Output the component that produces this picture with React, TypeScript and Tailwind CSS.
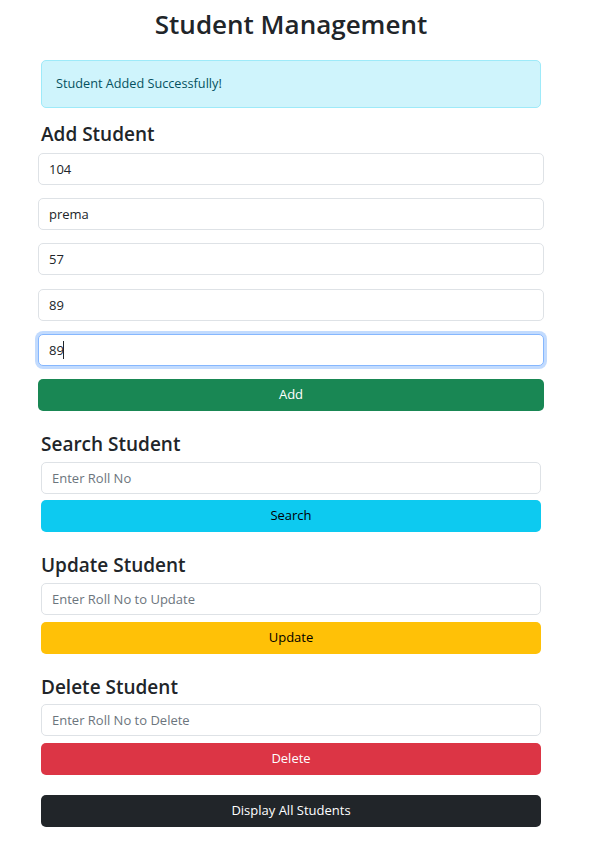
import React, { useState } from "react";

const font = { fontFamily: '"Open Sans", "Noto Sans", sans-serif' };

export default function App() {
    const [student, setStudent] = useState({
        roll: "104",
        name: "prema",
        m1: "57",
        m2: "89",
        m3: "89",
    });

    const handleChange = (e: React.ChangeEvent<HTMLInputElement>) => {
        const { name, value } = e.target;
        setStudent(prev => ({ ...prev, [name]: value }));
    };

    const inputCls =
        "block w-full h-[32px] px-[10px] text-[13px] text-[#212529] bg-white border border-[#dee2e6] rounded-[5px] outline-none placeholder:text-[#6c757d]";

    return (
        <div className="min-h-screen bg-white text-[#212529]" style={font}>
            <div className="ml-[41px] w-[500px] pt-[6px] pb-6">
                <h1 className="text-center text-[26px] leading-[36px] font-semibold mb-[18px]">
                    Student Management
                </h1>

                <div className="h-[48px] flex items-center px-[14px] bg-[#cff4fc] border border-[#9eeaf9] rounded-[5px] text-[12.7px] text-[#055160]">
                    Student Added Successfully!
                </div>

                {/* Add */}
                <h2 className="mt-[14px] mb-[7px] text-[19px] leading-[24px] font-semibold">Add Student</h2>
                <div className="-mx-[3px] flex flex-col gap-[13px]">
                    <input name="roll" value={student.roll} onChange={handleChange} className={inputCls} />
                    <input name="name" value={student.name} onChange={handleChange} className={inputCls} />
                    <input name="m1" value={student.m1} onChange={handleChange} className={inputCls} />
                    <input name="m2" value={student.m2} onChange={handleChange} className={`${inputCls} mt-px`} />
                    <div className="relative">
                        <input
                            name="m3"
                            value={student.m3}
                            onChange={handleChange}
                            className="block w-full h-[32px] px-[10px] text-[13px] text-[#212529] bg-white border border-[#86b7fe] rounded-[5px] outline-none ring-[3px] ring-[#0d6efd]/25"
                        />
                        <span className="absolute left-[25px] top-[7px] w-px h-[18px] bg-[#212529]" />
                    </div>
                    <button className="h-[32px] w-full rounded-[5px] bg-[#198754] text-white text-[13px]">Add</button>
                </div>

                {/* Search */}
                <h2 className="mt-[21px] mb-[6px] text-[19px] leading-[24px] font-semibold">Search Student</h2>
                <input placeholder="Enter Roll No" className={inputCls} />
                <button className="mt-[6px] h-[32px] w-full rounded-[5px] bg-[#0dcaf0] text-black text-[13px]">Search</button>

                {/* Update */}
                <h2 className="mt-[21px] mb-[6px] text-[19px] leading-[24px] font-semibold">Update Student</h2>
                <input placeholder="Enter Roll No to Update" className={inputCls} />
                <button className="mt-[7px] h-[32px] w-full rounded-[5px] bg-[#ffc107] text-black text-[13px]">Update</button>

                {/* Delete */}
                <h2 className="mt-[21px] mb-[5px] text-[19px] leading-[24px] font-semibold">Delete Student</h2>
                <input placeholder="Enter Roll No to Delete" className={inputCls} />
                <button className="mt-[7px] h-[32px] w-full rounded-[5px] bg-[#dc3545] text-white text-[13px]">Delete</button>

                <button className="mt-[20px] h-[32px] w-full rounded-[5px] bg-[#212529] text-white text-[13px]">
                    Display All Students
                </button>
            </div>
        </div>
    );
}
